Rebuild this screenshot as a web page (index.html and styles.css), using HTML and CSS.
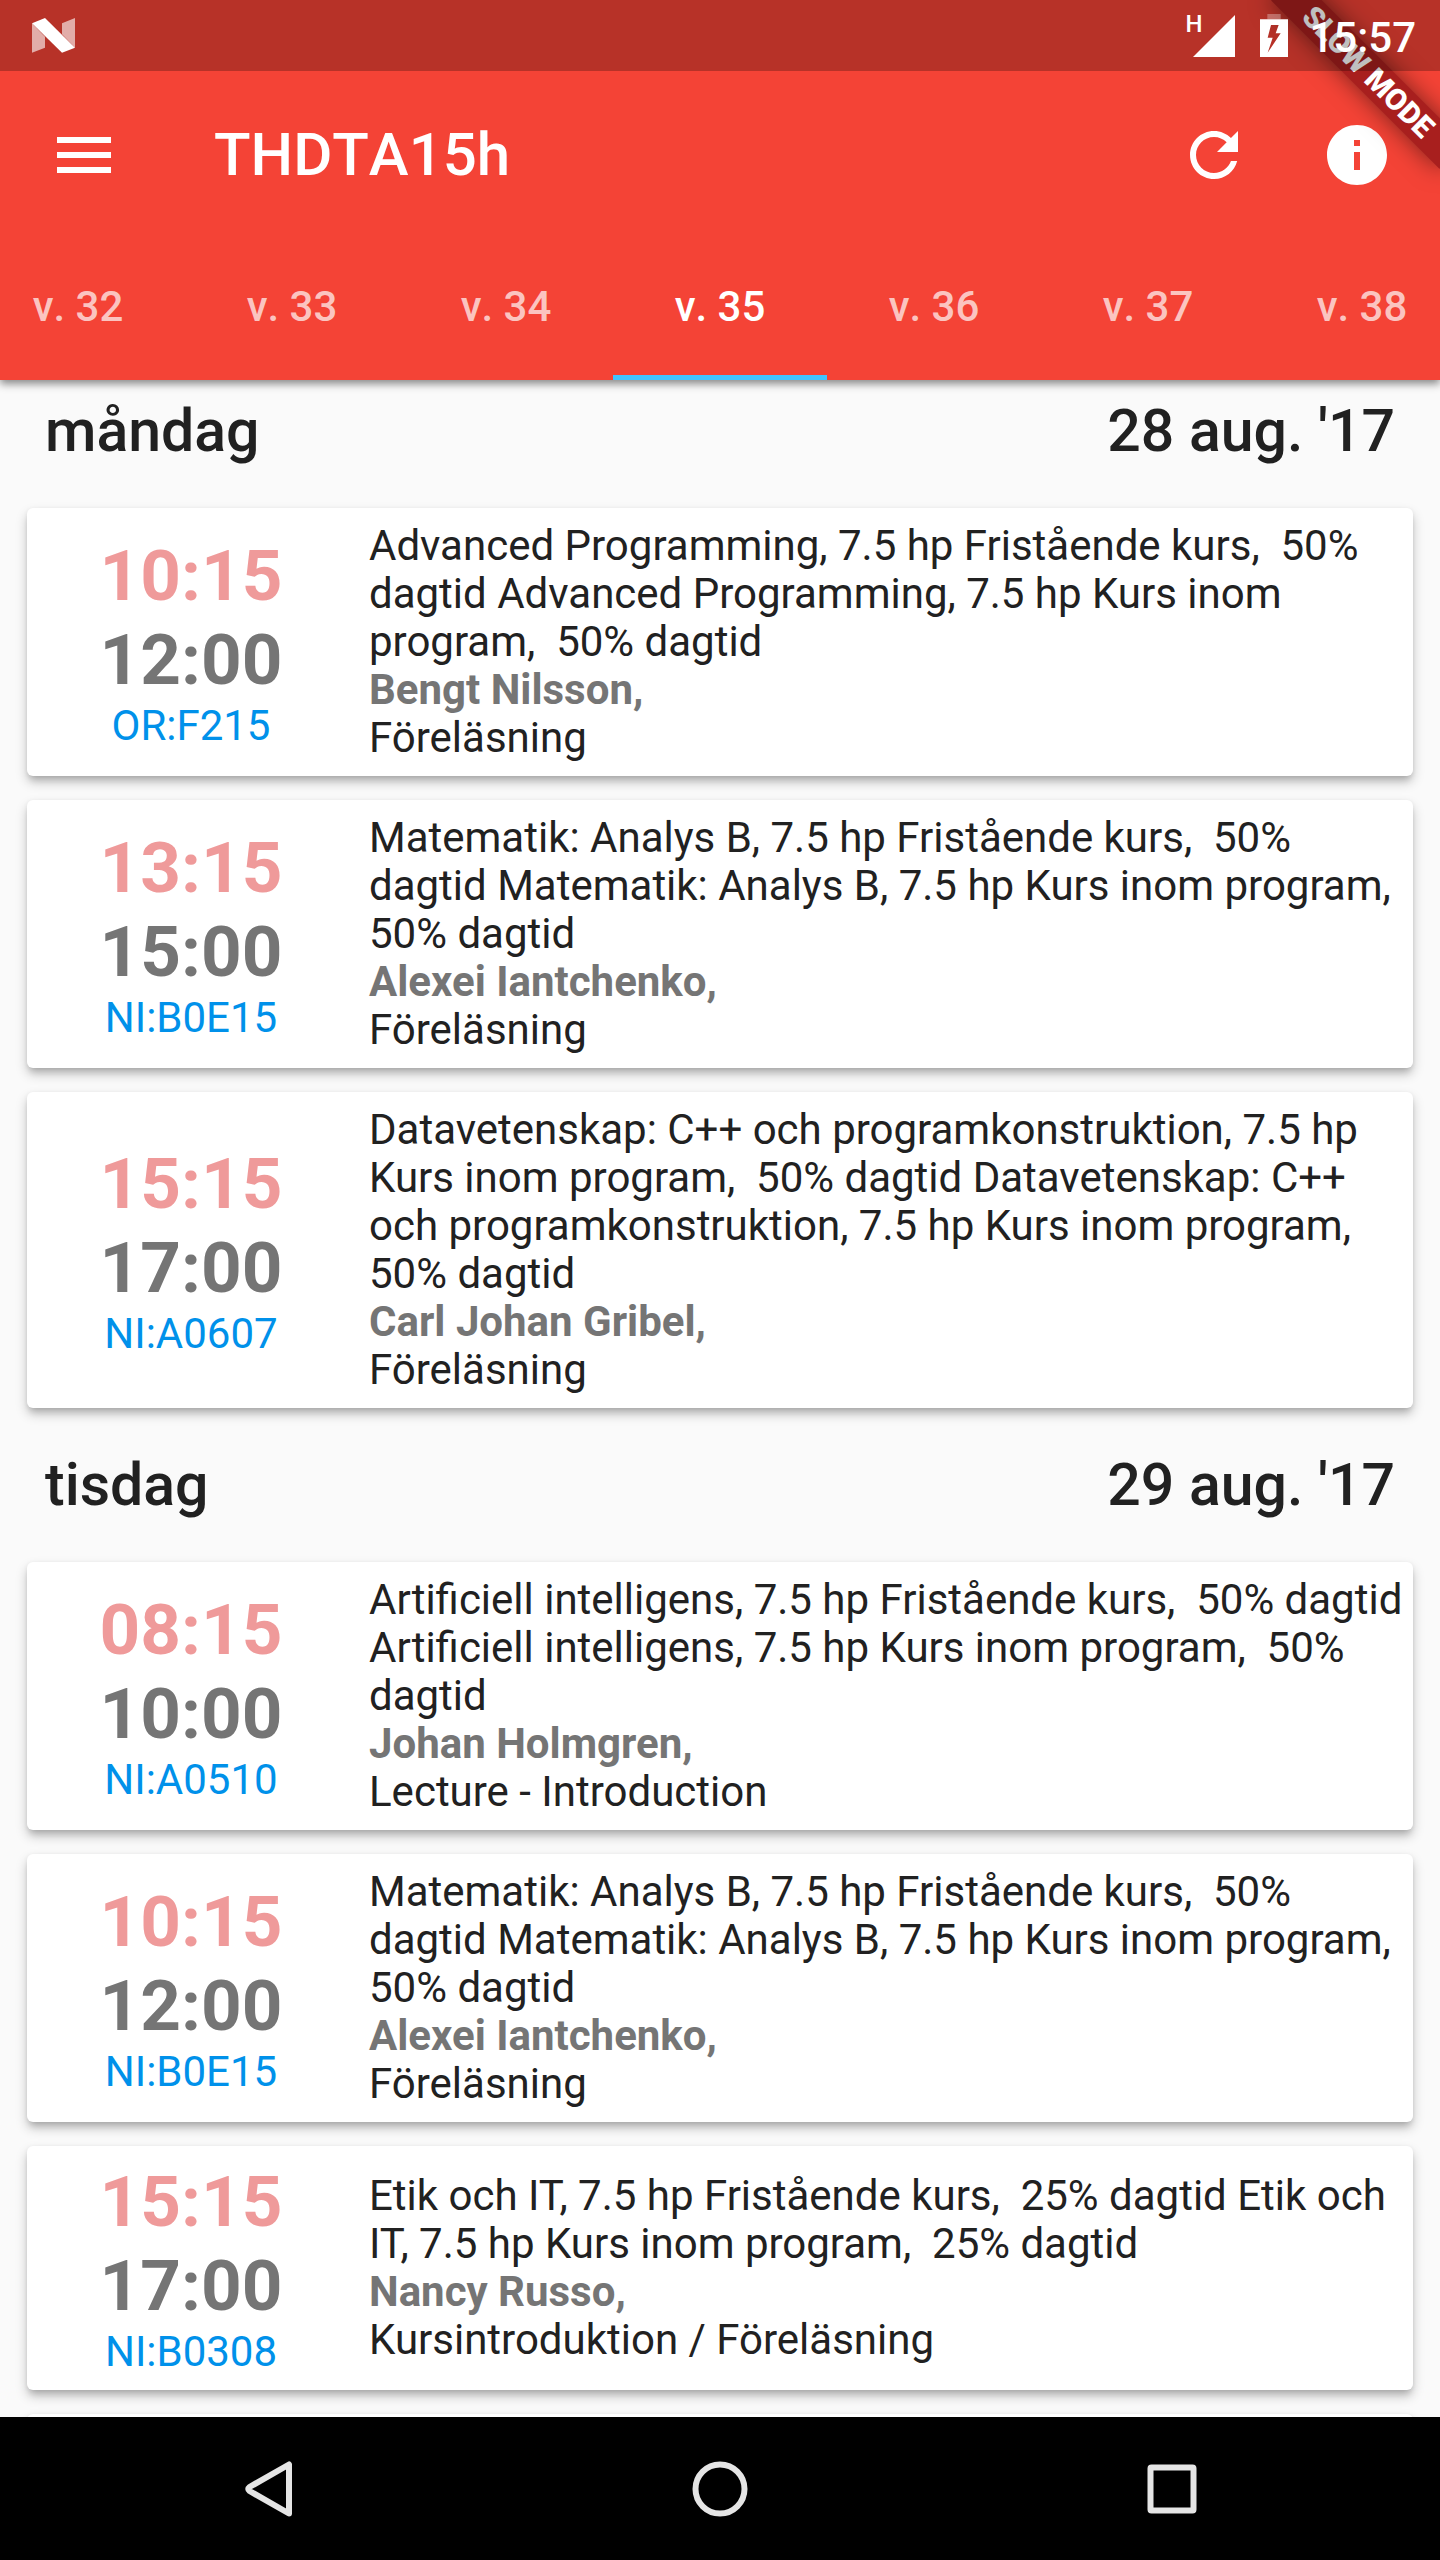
FILE: index.html
```html
<!DOCTYPE html>
<html lang="sv">
<head>
  <meta charset="utf-8">
  <meta name="viewport" content="width=device-width, initial-scale=1">
  <title>THDTA15h</title>
  <link rel="stylesheet" href="styles.css">
</head>
<body>
  <div class="app">
    <header class="app-header">
      <div class="status-bar">
        <svg class="notification-icon" viewBox="32 18 43 35" width="43" height="35" aria-hidden="true">
          <path class="faded" d="M32 23.3 45 36.7V47.7L32 52.7ZM62 23.3 75 18V47.7L62 34.3Z"/>
          <path d="M32 23.3 45 18 75 47.7 62 52.7Z"/>
        </svg>
        <div class="status-icons">
          <span class="network">H</span>
          <svg class="signal" viewBox="0 0 42 42" width="42" height="42" aria-hidden="true"><path d="M0 42 42 0V42Z"/></svg>
          <svg class="battery" viewBox="0 0 84 129" width="28" height="43" aria-hidden="true">
            <path class="faded" d="M22 0h40v16H22z"/>
            <path fill-rule="evenodd" d="M0 16H84V129H0ZM33 33 23 71H38L23 116 62 58H47L56 33Z"/>
          </svg>
          <time class="clock">15:57</time>
        </div>
      </div>

      <div class="toolbar">
        <button class="icon-button" type="button" aria-label="Meny">
          <svg viewBox="0 0 24 24" width="72" height="72"><path d="M3 18h18v-2H3v2zm0-5h18v-2H3v2zm0-7v2h18V6H3z"/></svg>
        </button>
        <h1 class="title">THDTA15h</h1>
        <button class="icon-button" type="button" aria-label="Uppdatera">
          <svg viewBox="0 0 24 24" width="72" height="72"><path d="M17.65 6.35C16.2 4.9 14.21 4 12 4c-4.42 0-7.99 3.58-7.99 8s3.57 8 7.99 8c3.73 0 6.84-2.55 7.73-6h-2.08c-.82 2.33-3.04 4-5.65 4-3.31 0-6-2.69-6-6s2.69-6 6-6c1.66 0 3.14.69 4.22 1.78L13 11h7V4l-2.35 2.35z"/></svg>
        </button>
        <button class="icon-button" type="button" aria-label="Information">
          <svg viewBox="0 0 24 24" width="72" height="72"><path d="M12 2C6.48 2 2 6.48 2 12s4.48 10 10 10 10-4.48 10-10S17.52 2 12 2zm1 15h-2v-6h2v6zm0-8h-2V7h2v2z"/></svg>
        </button>
      </div>

      <nav class="tabs" aria-label="Veckor">
        <button class="tab" type="button">v. 32</button>
        <button class="tab" type="button">v. 33</button>
        <button class="tab" type="button">v. 34</button>
        <button class="tab tab-active" type="button" aria-current="true">v. 35</button>
        <button class="tab" type="button">v. 36</button>
        <button class="tab" type="button">v. 37</button>
        <button class="tab" type="button">v. 38</button>
      </nav>

      <div class="ribbon-corner"><div class="ribbon">SLOW MODE</div></div>
    </header>

    <main class="schedule">
      <section class="day">
        <div class="day-header"><h2>måndag</h2><h2>28 aug. '17</h2></div>
        <ul class="lessons">
          <li class="lesson">
            <div class="when"><time class="start">10:15</time><time class="end">12:00</time><span class="room">OR:F215</span></div>
            <div class="what">
              <p>Advanced Programming, 7.5 hp Fristående kurs,  50% dagtid Advanced Programming, 7.5 hp Kurs inom program,  50% dagtid</p>
              <p class="teacher">Bengt Nilsson,</p>
              <p>Föreläsning</p>
            </div>
          </li>
          <li class="lesson">
            <div class="when"><time class="start">13:15</time><time class="end">15:00</time><span class="room">NI:B0E15</span></div>
            <div class="what">
              <p>Matematik: Analys B, 7.5 hp Fristående kurs,  50% dagtid Matematik: Analys B, 7.5 hp Kurs inom program,  50% dagtid</p>
              <p class="teacher">Alexei Iantchenko,</p>
              <p>Föreläsning</p>
            </div>
          </li>
          <li class="lesson">
            <div class="when"><time class="start">15:15</time><time class="end">17:00</time><span class="room">NI:A0607</span></div>
            <div class="what">
              <p>Datavetenskap: C++ och programkonstruktion, 7.5 hp Kurs inom program,  50% dagtid Datavetenskap: C++ och programkonstruktion, 7.5 hp Kurs inom program,  50% dagtid</p>
              <p class="teacher">Carl Johan Gribel,</p>
              <p>Föreläsning</p>
            </div>
          </li>
        </ul>
      </section>

      <section class="day">
        <div class="day-header"><h2>tisdag</h2><h2>29 aug. '17</h2></div>
        <ul class="lessons">
          <li class="lesson">
            <div class="when"><time class="start">08:15</time><time class="end">10:00</time><span class="room">NI:A0510</span></div>
            <div class="what">
              <p>Artificiell intelligens, 7.5 hp Fristående kurs,  50% dagtid Artificiell intelligens, 7.5 hp Kurs inom program,  50% dagtid</p>
              <p class="teacher">Johan Holmgren,</p>
              <p>Lecture - Introduction</p>
            </div>
          </li>
          <li class="lesson">
            <div class="when"><time class="start">10:15</time><time class="end">12:00</time><span class="room">NI:B0E15</span></div>
            <div class="what">
              <p>Matematik: Analys B, 7.5 hp Fristående kurs,  50% dagtid Matematik: Analys B, 7.5 hp Kurs inom program,  50% dagtid</p>
              <p class="teacher">Alexei Iantchenko,</p>
              <p>Föreläsning</p>
            </div>
          </li>
          <li class="lesson">
            <div class="when"><time class="start">15:15</time><time class="end">17:00</time><span class="room">NI:B0308</span></div>
            <div class="what">
              <p>Etik och IT, 7.5 hp Fristående kurs,  25% dagtid Etik och IT, 7.5 hp Kurs inom program,  25% dagtid</p>
              <p class="teacher">Nancy Russo,</p>
              <p>Kursintroduktion / Föreläsning</p>
            </div>
          </li>
          <li class="lesson"></li>
        </ul>
      </section>
    </main>

    <nav class="system-nav" aria-label="System">
      <button type="button" aria-label="Tillbaka">
        <svg viewBox="0 0 60 60" width="60" height="60"><path d="M51 5.500V54.500L11.500 32Q9 30 11.500 28Z"/></svg>
      </button>
      <button type="button" aria-label="Hem">
        <svg viewBox="0 0 60 60" width="60" height="60"><circle cx="30" cy="30" r="24.500"/></svg>
      </button>
      <button type="button" aria-label="Senaste">
        <svg viewBox="0 0 60 60" width="60" height="60"><rect x="8.500" y="8.500" width="43" height="43" rx="1"/></svg>
      </button>
    </nav>
  </div>
</body>
</html>
```

FILE: styles.css
```css
* {
  box-sizing: border-box;
}

body {
  margin: 0;
  font-family: Roboto, "Liberation Sans", sans-serif;
  font-size: 42px;
  line-height: 48px;
  color: #212121;
  background: #fafafa;
}

h1, h2, p, ul {
  margin: 0;
  padding: 0;
}

button {
  padding: 0;
  border: 0;
  background: none;
  font: inherit;
  color: inherit;
}

svg {
  display: block;
  fill: currentColor;
}

.faded {
  opacity: 0.6;
}

.app {
  display: flex;
  flex-direction: column;
  height: 100vh;
}

/* Header */
.app-header {
  position: relative;
  z-index: 1;
  flex: none;
  color: #fff;
  background: #f44336;
  box-shadow: 0 4px 8px rgba(0, 0, 0, 0.45);
}

.status-bar {
  position: relative;
  z-index: 2;
  display: flex;
  align-items: center;
  justify-content: space-between;
  height: 71px;
  padding: 0 24px 0 32px;
  background: rgba(0, 0, 0, 0.25);
}

.status-bar .battery .faded {
  opacity: 0.3;
}

.status-icons {
  display: flex;
  align-items: center;
}

.network {
  align-self: flex-start;
  margin-right: -9px;
  font-size: 24px;
  line-height: 28px;
  font-weight: 500;
}

.battery {
  margin: 0 21px 0 25px;
}

.clock {
  padding-top: 4px;
  font-weight: 500;
}

.toolbar {
  display: flex;
  align-items: center;
  height: 167px;
  padding: 0 12px;
}

.icon-button {
  display: grid;
  place-items: center;
  flex: none;
  width: 143px;
  height: 143px;
}

.title {
  flex: 1;
  margin-left: 59px;
  font-size: 60px;
  line-height: 70px;
  font-weight: 500;
  font-kerning: none;
}

.tabs {
  display: flex;
  justify-content: center;
  overflow: hidden;
}

.tab {
  flex: none;
  width: 214px;
  height: 142px;
  border-bottom: 5px solid transparent;
  font-weight: 500;
  font-kerning: none;
  color: rgba(255, 255, 255, 0.7);
}

.tab-active {
  color: #fff;
  border-bottom-color: #40c4ff;
}

/* Diagonal ribbon over the top right corner */
.ribbon-corner {
  position: absolute;
  top: 0;
  right: 0;
  width: 200px;
  height: 200px;
  overflow: hidden;
  pointer-events: none;
}

.ribbon {
  position: absolute;
  top: 54px;
  left: 9px;
  width: 238px;
  height: 36px;
  font-size: 30px;
  line-height: 36px;
  font-weight: 900;
  text-align: center;
  background: #a81f1e;
  box-shadow: 0 0 24px rgba(0, 0, 0, 0.5);
  transform: rotate(45deg);
}

/* Schedule */
.schedule {
  flex: 1;
  min-height: 0;
  overflow-y: auto;
  scrollbar-width: none;
}

.day + .day {
  margin-top: 26px;
}

.day-header {
  display: flex;
  justify-content: space-between;
  padding: 16px 45px 42px;
}

.day-header h2 {
  font-size: 59px;
  line-height: 70px;
  font-weight: 500;
}

.lessons {
  display: flex;
  flex-direction: column;
  gap: 24px;
  padding: 0 27px;
  list-style: none;
}

.lesson {
  display: flex;
  align-items: center;
  gap: 28px;
  padding: 14px 10px 14px 14px;
  border-radius: 6px;
  background: #fff;
  box-shadow:
    0 7px 6px -3px rgba(0, 0, 0, 0.12),
    0 6px 12px rgba(0, 0, 0, 0.22),
    0 1px 4px rgba(0, 0, 0, 0.06);
}

.when {
  display: flex;
  flex: none;
  flex-direction: column;
  align-items: center;
  width: 300px;
}

.start,
.end {
  font-size: 71px;
  line-height: 84px;
  font-weight: 700;
}

.start {
  color: #ef9a9a;
}

.end,
.teacher {
  color: #757575;
}

.room {
  color: #0091ea;
}

.what {
  flex: 1;
}

.what p {
  white-space: pre-wrap;
}

.teacher {
  font-weight: 700;
}

/* System navigation */
.system-nav {
  display: grid;
  grid-template-columns: repeat(3, 1fr);
  flex: none;
  height: 143px;
  padding: 0 42px;
  color: #e5e5e5;
  background: #000;
}

.system-nav button {
  display: grid;
  place-items: center;
}

.system-nav svg {
  fill: none;
  stroke: currentColor;
  stroke-width: 6;
  stroke-linejoin: round;
}
```
